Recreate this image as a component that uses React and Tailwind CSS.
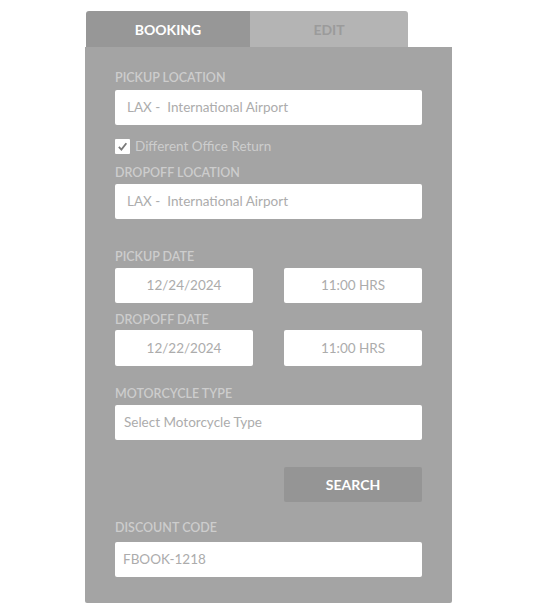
import React from 'react';

const font = { fontFamily: 'Lato, "Open Sans", sans-serif' };

function Label({ children, className = '' }) {
  return (
    <div className={`h-4 text-[12.5px] leading-4 font-semibold text-[#cdcdcd] ${className}`}>
      {children}
    </div>
  );
}

function Field({ value, className = '', center = false }) {
  return (
    <div
      className={`h-[35px] bg-white rounded-[2px] flex items-center text-[13.5px] text-[#acacac] whitespace-pre ${
        center ? 'justify-center' : 'px-3'
      } ${className}`}
    >
      {value}
    </div>
  );
}

export default function App() {
  return (
    <div className="w-[537px] h-[615px] bg-white pt-[11px] pl-[85px]" style={font}>
      <div className="w-[367px]">
        <div className="flex ml-px w-[322px] h-9 rounded-t-[3px] overflow-hidden">
          <div className="w-[164px] bg-[#979797] flex items-center justify-center text-[14px] font-bold text-white">
            BOOKING
          </div>
          <div className="flex-1 bg-[#b4b4b4] flex items-center justify-center text-[14px] font-bold text-[#9b9b9b]">
            EDIT
          </div>
        </div>
        <div className="bg-[#a4a4a4] rounded-b-[2px] px-[30px] pt-[23px] pb-[26px] flex flex-col">
          <Label>PICKUP LOCATION</Label>
          <Field className="mt-1" value="LAX -  International Airport" />

          <div className="mt-[13px] h-4 flex items-center gap-[5px]">
            <div className="w-[15px] h-[15px] bg-white rounded-[1px] flex items-center justify-center">
              <svg width="11" height="11" viewBox="0 0 12 12">
                <path d="M2 6.5 L4.8 9.3 L10.2 2.5" fill="none" stroke="#7a7a7a" strokeWidth="2" />
              </svg>
            </div>
            <span className="text-[13.5px] text-[#cdcdcd]">Different Office Return</span>
          </div>

          <Label className="mt-[11px]">DROPOFF LOCATION</Label>
          <Field className="mt-[3px]" value="LAX -  International Airport" />

          <Label className="mt-[30px]">PICKUP DATE</Label>
          <div className="mt-[3px] flex justify-between">
            <Field center className="w-[138px]" value="12/24/2024" />
            <Field center className="w-[138px]" value="11:00 HRS" />
          </div>

          <Label className="mt-[9px]">DROPOFF DATE</Label>
          <div className="mt-[2px] flex justify-between">
            <Field center className="w-[138px] h-[36px]" value="12/22/2024" />
            <Field center className="w-[138px] h-[36px]" value="11:00 HRS" />
          </div>

          <Label className="mt-5">MOTORCYCLE TYPE</Label>
          <Field className="mt-[3px] !px-[9px]" value="Select Motorcycle Type" />

          <button className="mt-[27px] self-end w-[138px] h-[35px] bg-[#959595] rounded-[2px] text-[14px] font-bold text-white">
            SEARCH
          </button>

          <Label className="mt-[18px]">DISCOUNT CODE</Label>
          <Field className="mt-1.5 !px-[8px]" value="FBOOK-1218" />
        </div>
      </div>
    </div>
  );
}
